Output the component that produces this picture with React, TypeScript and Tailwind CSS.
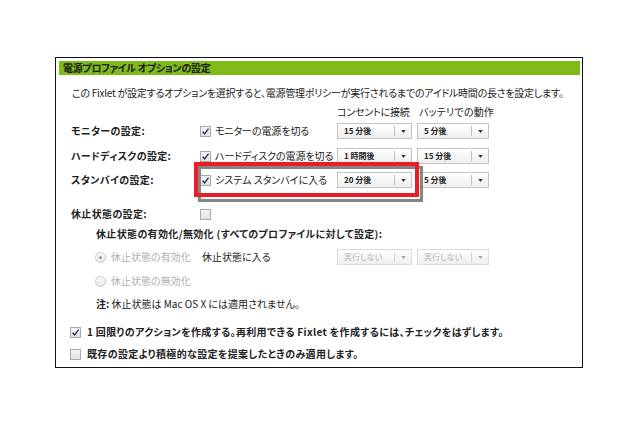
import React from "react";

const font = "[font-family:'Noto_Sans_CJK_JP','Noto_Sans',sans-serif] [font-feature-settings:'palt']";

function Check({ checked = false }: { checked?: boolean }) {
  return (
    <span className="inline-flex h-[11px] w-[11px] shrink-0 items-center justify-center border border-[#a9a9a9] bg-gradient-to-b from-[#f4f4f4] to-[#e2e2e2]">
      {checked && (
        <svg viewBox="0 0 10 10" className="h-[9px] w-[9px]">
          <path d="M1.8 5.2 L4 7.6 L8.4 1.8" fill="none" stroke="#2b3b5c" strokeWidth="1.6" />
        </svg>
      )}
    </span>
  );
}

function Radio({ selected = false }: { selected?: boolean }) {
  return (
    <span className="inline-flex h-[11px] w-[11px] shrink-0 items-center justify-center rounded-full border border-[#c8c8c8] bg-gradient-to-b from-[#fafafa] to-[#e8e8e8]">
      {selected && <span className="h-[3px] w-[3px] rounded-full bg-[#9a9a9a]" />}
    </span>
  );
}

function Drop({ label, w, disabled = false }: { label: string; w: string; disabled?: boolean }) {
  return (
    <div
      className={`flex h-[16px] items-center border bg-gradient-to-b from-white to-[#eeeeee] ${w} ${
        disabled ? "border-[#dcdcdc] text-[#b4b4b4]" : "border-[#c4c4c4] text-[#222]"
      }`}
    >
      <span className={`flex-1 pl-[6px] text-[8px] leading-none ${disabled ? "font-normal" : "font-bold"}`}>{label}</span>
      <span className={`h-[10px] w-px ${disabled ? "bg-[#d8d8d8]" : "bg-[#c0c0c0]"}`} />
      <span className="flex w-[16px] items-center justify-center">
        <svg viewBox="0 0 6 4" className="h-[3px] w-[5px]">
          <path d="M0 0 L6 0 L3 4 Z" fill={disabled ? "#a8a8a8" : "#333"} />
        </svg>
      </span>
    </div>
  );
}

export default function App() {
  return (
    <div className={`min-h-[426px] w-[640px] bg-white pl-[55px] pt-[57px] text-[10px] text-[#222] ${font}`}>
      <div className="box-border flex h-[311px] w-[528px] flex-col border border-[#111] p-[3px] pr-[2px]">
        <div className="flex h-[14px] items-center bg-[#7fb91a] pl-[4px] text-[10px] font-bold leading-none tracking-[-0.3px] text-[#1a1a1a]">
          電源プロファイル オプションの設定
        </div>

        <div className="mt-[10px] flex h-[16px] items-center pl-[13px] leading-none tracking-[-0.25px]">
          この Fixlet が設定するオプションを選択すると、電源管理ポリシーが実行されるまでのアイドル時間の長さを設定します。
        </div>

        <div className="mt-[3px] flex h-[16px] items-center leading-none">
          <span className="w-[278px]" />
          <span className="w-[82px] tracking-[-0.2px]">コンセントに接続</span>
          <span className="tracking-[0.2px]">バッテリでの動作</span>
        </div>

        {[
          { l: "モニターの設定:", c: "モニターの電源を切る", a: "15 分後", b: "5 分後", mt: "mt-[3px]" },
          { l: "ハードディスクの設定:", c: "ハードディスクの電源を切る", a: "1 時間後", b: "15 分後", mt: "mt-[9px]" },
        ].map((r) => (
          <div key={r.l} className={`${r.mt} flex h-[16px] items-center leading-none`}>
            <span className="w-[141px] pl-[12px] font-bold tracking-[0.35px]">{r.l}</span>
            <span className="flex w-[137px] items-center gap-[4px]">
              <Check checked />
              <span className="whitespace-nowrap tracking-[-0.1px]">{r.c}</span>
            </span>
            <Drop label={r.a} w="w-[75px]" />
            <span className="w-[5px]" />
            <Drop label={r.b} w="w-[72px]" />
          </div>
        ))}

        <div className="mt-[8px] flex h-[16px] items-center leading-none">
          <span className="w-[141px] pl-[12px] font-bold tracking-[0.35px]">スタンバイの設定:</span>
          <div className="relative flex items-center">
            <span className="pointer-events-none absolute left-[-2px] right-[-11px] top-[-6px] bottom-[-14px] border-[3px] border-[#858585]" />
            <span className="pointer-events-none absolute left-[-6px] right-[-7px] top-[-10px] bottom-[-9px] border-[4px] border-[#ec1c24]" />
            <span className="flex w-[137px] items-center gap-[4px]">
              <Check checked />
              <span className="whitespace-nowrap">システム スタンバイに入る</span>
            </span>
            <Drop label="20 分後" w="w-[75px]" />
          </div>
          <span className="w-[5px]" />
          <Drop label="5 分後" w="w-[72px]" />
        </div>

        <div className="mt-[18px] flex h-[16px] items-center leading-none">
          <span className="w-[141px] pl-[12px] font-bold tracking-[0.35px]">休止状態の設定:</span>
          <Check />
        </div>

        <div className="mt-[4px] flex h-[16px] items-center pl-[37px] font-bold leading-none tracking-[0.35px]">
          休止状態の有効化/無効化 (すべてのプロファイルに対して設定):
        </div>

        <div className="mt-[7px] flex h-[16px] items-center leading-none">
          <span className="flex w-[143px] items-center gap-[5px] pl-[36px] text-[#b0b0b0]">
            <Radio selected />
            <span className="whitespace-nowrap">休止状態の有効化</span>
          </span>
          <span className="w-[135px]">休止状態に入る</span>
          <Drop label="実行しない" w="w-[75px]" disabled />
          <span className="w-[5px]" />
          <Drop label="実行しない" w="w-[72px]" disabled />
        </div>

        <div className="mt-[8px] flex h-[16px] items-center gap-[5px] pl-[36px] leading-none text-[#b0b0b0]">
          <Radio />
          <span>休止状態の無効化</span>
        </div>

        <div className="mt-[7px] flex h-[16px] items-center pl-[37px] leading-none">
          <span className="font-bold">注:</span>
          <span>&nbsp;休止状態は Mac OS X には適用されません。</span>
        </div>

        <div className="mt-[12px] flex h-[16px] items-center gap-[6px] pl-[11px] font-bold leading-none tracking-[0.35px]">
          <Check checked />
          <span>1 回限りのアクションを作成する。再利用できる Fixlet を作成するには、チェックをはずします。</span>
        </div>

        <div className="mt-[6px] flex h-[16px] items-center gap-[6px] pl-[11px] font-bold leading-none tracking-[0.35px]">
          <Check />
          <span>既存の設定より積極的な設定を提案したときのみ適用します。</span>
        </div>
      </div>
    </div>
  );
}
